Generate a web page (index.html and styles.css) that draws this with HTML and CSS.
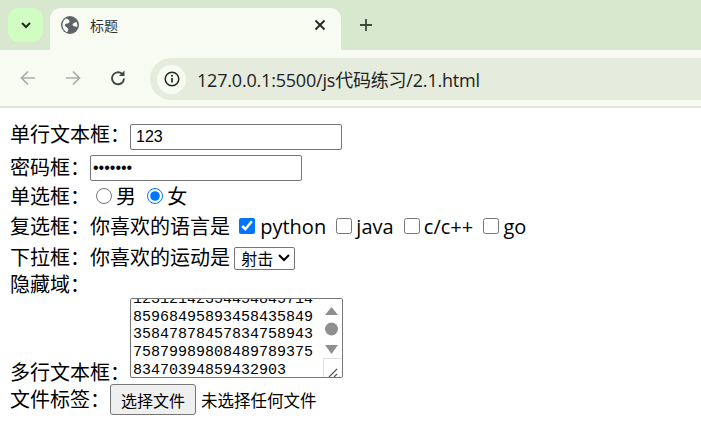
FILE: index.html
```html
<!DOCTYPE html>
<html>
<head>
    <meta charset="utf-8">
    <title>标题</title>
    <link rel="stylesheet" href="styles.css">
</head>
<body>
    <div class="tab-strip">
        <div class="tab-search">
            <svg width="14" height="14" viewBox="0 0 14 14"><path d="M3 5l4 4 4-4" fill="none" stroke="#1f2a1c" stroke-width="2"/></svg>
        </div>
        <div class="tab">
            <svg class="favicon" width="18" height="18" viewBox="0 0 18 18">
                <circle cx="9" cy="9" r="9" fill="#5f6368"/>
                <path d="M5 2.500c2 .5 4 1.500 3.500 3.500S5 7 4 8.500 6 11 7 12.500 6 16 6 16.500C3 15 1.500 12 1.500 9S3 3.500 5 2.500zM15.500 6c.8 1.500 1 3 .8 4.500-1.500.5-3.500 0-4.500-1S13 6.500 15.500 6z" fill="#f8fbf2"/>
            </svg>
            <span class="tab-title">标题</span>
            <svg class="tab-close" width="12" height="12" viewBox="0 0 12 12"><path d="M1.500 1.500l9 9M10.500 1.500l-9 9" stroke="#1f2a1c" stroke-width="1.800"/></svg>
        </div>
        <svg class="new-tab" width="14" height="14" viewBox="0 0 14 14"><path d="M7 1v12M1 7h12" stroke="#3c4a38" stroke-width="1.800"/></svg>
    </div>
    <div class="toolbar">
        <svg class="nav-icon" width="18" height="18" viewBox="0 0 18 18"><path d="M16 9H2.500M9 2.500L2.500 9 9 15.500" fill="none" stroke="#a9aea5" stroke-width="1.700"/></svg>
        <svg class="nav-icon" width="18" height="18" viewBox="0 0 18 18"><path d="M2 9h13.500M9 2.500L15.500 9 9 15.500" fill="none" stroke="#a9aea5" stroke-width="1.700"/></svg>
        <svg class="nav-icon" width="18" height="18" viewBox="0 0 18 18"><path d="M15 9.500A6 6 0 1 1 13 4.800" fill="none" stroke="#3c4a38" stroke-width="1.900"/><path d="M15.500 1.500v5.500H10z" fill="#3c4a38"/></svg>
        <div class="address-bar">
            <div class="site-info">
                <svg width="16" height="16" viewBox="0 0 16 16"><circle cx="8" cy="8" r="6.800" fill="none" stroke="#1f2a1c" stroke-width="1.500"/><path d="M8 7v4.500" stroke="#1f2a1c" stroke-width="1.700"/><circle cx="8" cy="4.800" r="1" fill="#1f2a1c"/></svg>
            </div>
            <span class="url">127.0.0.1:5500/js代码练习/2.1.html</span>
        </div>
    </div>
    <form class="page">
        <div class="line line-text">单行文本框：<input class="field" type="text" value="123"></div>
        <div class="line line-pass">密码框：<input class="field" type="password" value="1234567"></div>
        <div class="line line-radio">单选框：<input class="radio" type="radio" name="sex">男
            <input class="radio" type="radio" name="sex" checked>女
        </div>
        <div class="line line-check">复选框：你喜欢的语言是
            <input class="check" type="checkbox" checked>python
            <input class="check" type="checkbox">java
            <input class="check" type="checkbox">c/c++
            <input class="check" type="checkbox">go
        </div>
        <div class="line line-select">下拉框：你喜欢的运动是
            <select class="sport"><option>射击</option></select>
        </div>
        <div class="line line-hidden">隐藏域：<input type="hidden" value="x"></div>
        <div class="line line-area">多行文本框：<div class="memo">
                <div class="memo-text">12312142354454845714
85968495893458435849
35847878457834758943
75879989808489789375
83470394859432903</div>
                <div class="memo-bar">
                    <svg width="19" height="60" viewBox="0 0 19 60">
                        <path d="M8.500 8l6.500 8H2z" fill="#8f8f8f"/>
                        <circle cx="8.500" cy="30" r="6.500" fill="#8f8f8f"/>
                        <path d="M8.500 55L15 46H2z" fill="#8f8f8f"/>
                    </svg>
                </div>
                <div class="memo-grip">
                    <svg width="17" height="19" viewBox="0 0 17 19"><path d="M5 15l8-8M10 15l3-3" stroke="#555" stroke-width="1.200"/></svg>
                </div>
            </div>
        </div>
        <div class="line line-file">文件标签：<button class="file-btn" type="button">选择文件</button><span class="file-name">未选择任何文件</span></div>
    </form>
</body>
</html>
```

FILE: styles.css
```css
* {
    box-sizing: border-box;
}
body {
    margin: 0;
    height: 429px;
    overflow: hidden;
    background: #fff;
    color: #000;
    font-family: "Open Sans", "Noto Sans CJK SC", sans-serif;
    font-size: 20px;
}
.tab-strip {
    display: flex;
    align-items: flex-start;
    height: 50px;
    padding: 8px 0 0 8px;
    background: #d8e8cf;
}
.tab-search {
    display: flex;
    align-items: center;
    justify-content: center;
    width: 35px;
    height: 34px;
    border-radius: 11px;
    background: #d2fdc2;
}
.tab {
    display: flex;
    align-items: center;
    width: 291px;
    height: 42px;
    margin-left: 7px;
    padding: 0 15px 9px 11px;
    border-radius: 11px 11px 0 0;
    background: #f8fbf2;
}
.tab-title {
    flex: 1;
    margin-left: 11px;
    font-family: "Noto Sans CJK SC", sans-serif;
    font-size: 14px;
    color: #333;
}
.new-tab {
    margin: 10px 0 0 18px;
}
.toolbar {
    display: flex;
    align-items: center;
    height: 58px;
    padding: 8px 0 6px 19px;
    border-bottom: 2px solid #dfe6d8;
    background: #f8fbf2;
}
.nav-icon {
    margin: 0 27px 2px 0;
}
.address-bar {
    display: flex;
    align-items: center;
    flex: 1;
    height: 42px;
    margin-left: -4px;
    padding-left: 7px;
    border-radius: 21px 0 0 21px;
    background: #e5ecdd;
}
.site-info {
    display: flex;
    align-items: center;
    justify-content: center;
    width: 29px;
    height: 29px;
    border-radius: 50%;
    background: #f8fbf2;
}
.url {
    margin-left: 11px;
    font-family: "Open Sans", "Noto Sans CJK SC", sans-serif;
    font-size: 18px;
    letter-spacing: -0.2px;
    color: #222;
}
.page {
    padding: 12px 10px 0;
}
.line {
    line-height: 29px;
    white-space: nowrap;
}
.line-text {
    height: 33px;
}
.line-pass {
    height: 29px;
}
.line-radio {
    height: 30px;
}
.line-check {
    height: 31px;
}
.line-select {
    height: 27px;
}
.line-hidden {
    height: 28px;
}
.line-area {
    height: 86px;
}
.field {
    width: 212px;
    height: 26px;
    margin: 0;
    padding: 1px 2px;
    border: 1px solid #767676;
    border-radius: 2px;
    font-family: "Liberation Sans", sans-serif;
    font-size: 16px;
}
.line-text .field {
    padding-left: 5px;
}
.line-pass .field {
    vertical-align: 2px;
}
.radio {
    width: 16px;
    height: 16px;
    margin: 0 4px 0 6px;
}
.check {
    width: 16px;
    height: 16px;
    margin: 0 4px 0 5px;
}
.check:first-of-type {
    margin: 0 5px 0 4px;
}
.sport {
    width: 61px;
    height: 23px;
    margin-left: -1px;
    padding: 0 0 0 6px;
    border: 1px solid #767676;
    border-radius: 2px;
    appearance: none;
    background: #fff url("data:image/svg+xml,%3Csvg xmlns='http://www.w3.org/2000/svg' width='14' height='10'%3E%3Cpath d='M2 2l5 5 5-5' fill='none' stroke='%23000' stroke-width='2'/%3E%3C/svg%3E") no-repeat right 3px center;
    font-family: "Noto Sans CJK SC", sans-serif;
    font-size: 16px;
    line-height: 20px;
}
.memo {
    display: inline-block;
    position: relative;
    width: 213px;
    height: 80px;
    overflow: hidden;
    vertical-align: 2px;
    border: 1px solid #767676;
    border-radius: 2px;
    background: #fff;
}
.memo-text {
    margin-top: -8px;
    padding-left: 2px;
    font-family: "Liberation Mono", monospace;
    font-size: 15px;
    line-height: 17.700px;
    white-space: pre;
}
.memo-bar {
    position: absolute;
    top: 0;
    right: 0;
    width: 19px;
    height: 60px;
    background: #fff;
}
.memo-grip {
    position: absolute;
    right: 0;
    bottom: 0;
    width: 19px;
    height: 19px;
    border-top: 1px solid #e0e0e0;
    border-left: 1px solid #e0e0e0;
    background: #fff;
}
.file-btn {
    height: 31px;
    margin: 0;
    padding: 0 10px;
    border: 1px solid #767676;
    border-radius: 3px;
    background: #efefef;
    font-family: "Noto Sans CJK SC", sans-serif;
    font-size: 16px;
    line-height: 1;
}
.file-name {
    margin-left: 5px;
    font-family: "Noto Sans CJK SC", sans-serif;
    font-size: 16.500px;
}
```
